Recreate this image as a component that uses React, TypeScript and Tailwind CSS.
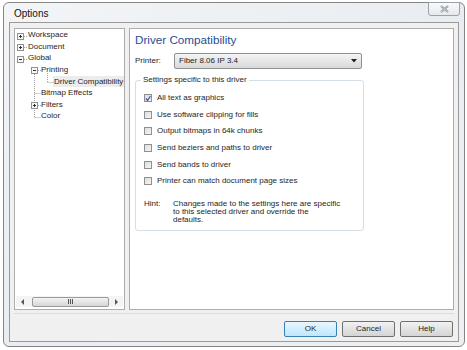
import React from "react";

const font = { fontFamily: '"Liberation Sans", Arial, sans-serif' };

function TreeLines() {
  const dot = { stroke: "#a0a0a0", strokeWidth: 1, strokeDasharray: "1 1" };
  const Box = ({ x, y, plus }: { x: number; y: number; plus: boolean }) => (
    <g>
      <rect x={x - 3} y={y - 3} width={6} height={6} fill="#f7f7f7" stroke="#919191" strokeWidth={1} />
      <line x1={x - 1.5} y1={y} x2={x + 1.5} y2={y} stroke="#333" strokeWidth={1} />
      {plus && <line x1={x} y1={y - 1.5} x2={x} y2={y + 1.5} stroke="#333" strokeWidth={1} />}
    </g>
  );
  // coords inside the tree panel border (page x 15, y 29)
  return (
    <svg className="absolute left-px top-px pointer-events-none" width={110} height={100}>
      <line x1={8} y1={6.5} x2={12} y2={6.5} {...dot} />
      <line x1={8} y1={17.5} x2={12} y2={17.5} {...dot} />
      <line x1={8} y1={29.5} x2={12} y2={29.5} {...dot} />
      <line x1={18.5} y1={44} x2={18.5} y2={87.5} {...dot} />
      <line x1={22} y1={40.5} x2={25} y2={40.5} {...dot} />
      <line x1={18.5} y1={63.5} x2={25} y2={63.5} {...dot} />
      <line x1={22} y1={75.5} x2={25} y2={75.5} {...dot} />
      <line x1={18.5} y1={87.5} x2={25} y2={87.5} {...dot} />
      <line x1={31.5} y1={41} x2={31.5} y2={52.5} {...dot} />
      <line x1={31.5} y1={52.5} x2={38} y2={52.5} {...dot} />
      <Box x={4.5} y={6.5} plus />
      <Box x={4.5} y={17.5} plus />
      <Box x={4.5} y={29.5} plus={false} />
      <Box x={18.5} y={40.5} plus={false} />
      <Box x={18.5} y={75.5} plus />
    </svg>
  );
}

function Tree() {
  const rows: [string, number, boolean?][] = [
    ["Workspace", 0],
    ["Document", 0],
    ["Global", 0],
    ["Printing", 1],
    ["Driver Compatibility", 2, true],
    ["Bitmap Effects", 1],
    ["Filters", 1],
    ["Color", 1],
  ];
  return (
    <div className="w-[111px] shrink-0 border border-[#adadad] bg-white flex flex-col relative">
      <TreeLines />
      <div className="flex-1 flex flex-col overflow-hidden">
        {rows.map(([label, lvl, sel]) => (
          <div key={label} className="h-[11.6px] flex items-center">
            <div
              className={
                "shrink-0 " + (lvl === 0 ? "w-[12px]" : lvl === 1 ? "w-[25px]" : "w-[38px]")
              }
            />
            <span
              className={
                "text-[8px] leading-[11px] text-[#1e1e1e] px-[1px] whitespace-nowrap " +
                (sel ? "bg-[#ececec] pr-[3px]" : "")
              }
            >
              {label}
            </span>
          </div>
        ))}
      </div>
      <div className="h-[11px] mx-[1px] mb-[2px] flex items-center gap-[2px] bg-[#f4f4f4]">
        <div className="w-[14px] flex justify-center">
          <svg width="4" height="6"><path d="M3 0 L0 3 L3 6 Z" fill="#555" /></svg>
        </div>
        <div className="flex-1 h-[10px] rounded-[2px] border border-[#9a9a9a] bg-gradient-to-b from-[#f4f4f4] to-[#d6d6d6] flex items-center justify-center">
          <svg width="6" height="5">
            <path d="M0.5 0 V5 M2.5 0 V5 M4.5 0 V5" stroke="#555" strokeWidth="1" />
          </svg>
        </div>
        <div className="w-[12px] flex justify-center">
          <svg width="4" height="6"><path d="M0 0 L3 3 L0 6 Z" fill="#555" /></svg>
        </div>
      </div>
    </div>
  );
}

function Check({ label, checked }: { label: string; checked?: boolean }) {
  return (
    <div className="h-[16.6px] flex items-center gap-[5px]">
      <div className="w-[8px] h-[8px] border border-[#8f8f8f] bg-gradient-to-br from-[#dcdcdc] to-[#f6f6f6] flex items-center justify-center">
        {checked && (
          <svg width="7" height="7" viewBox="0 0 7 7">
            <path d="M1 3.5 L3 5.8 L6.3 0.8" stroke="#3a58a8" strokeWidth="1.4" fill="none" />
          </svg>
        )}
      </div>
      <span className="text-[8px] text-[#1e1e1e] whitespace-nowrap">{label}</span>
    </div>
  );
}

function Btn({ label, def }: { label: string; def?: boolean }) {
  return (
    <div
      className={
        "w-[53px] h-[16px] rounded-[2px] border flex items-center justify-center text-[8px] text-[#1e1e1e] " +
        (def
          ? "border-[#3c7fb1] bg-gradient-to-b from-[#eaf6fd] to-[#bee6fd]"
          : "border-[#707070] bg-gradient-to-b from-[#f2f2f2] to-[#d4d4d4]")
      }
    >
      {label}
    </div>
  );
}

export default function App() {
  return (
    <div className="w-[467px] h-[350px] bg-white pt-[2px] pl-[3px]" style={font}>
      <div className="w-[462px] h-[345px] rounded-[6px] border border-[#858585] bg-gradient-to-br from-[#f3f5f7] via-[#e9edf1] to-[#eef0f2] flex flex-col px-[5px] pb-[4px]">
        <div className="h-[19px] flex justify-between">
          <span className="text-[10px] text-[#111] pl-[5px] pt-[5px] leading-[12px]">Options</span>
          <div className="w-[32px] h-[14px] mr-[-1px] mt-[-1px] rounded-b-[3px] border border-[#9aa2ab] bg-gradient-to-b from-[#f9fafb] to-[#e6e9ec] flex items-center justify-center">
            <svg width="9" height="8" viewBox="0 0 9 8">
              <path d="M1 1 L8 7 M8 1 L1 7" stroke="#8a8f95" strokeWidth="2" />
              <path d="M1 1 L8 7 M8 1 L1 7" stroke="#f4f4f4" strokeWidth="0.6" />
            </svg>
          </div>
        </div>
        <div className="flex-1 border border-[#9a9a9a] bg-[#f0f0f0] flex flex-col pt-[5px] px-[4px]">
          <div className="h-[282px] flex gap-[4px]">
            <Tree />
            <div className="flex-1 border border-[#adadad] bg-white pl-[5px] pt-[3px]">
              <div className="text-[11.7px] leading-[16px] text-[#1e4e96]">Driver Compatibility</div>
              <div className="flex items-center mt-[5px]">
                <span className="w-[39px] text-[8px] text-[#1e1e1e]">Printer:</span>
                <div className="w-[188px] h-[16px] rounded-[2px] border border-[#8e8f8f] bg-gradient-to-b from-[#f4f4f4] to-[#d9d9d9] flex items-center justify-between px-[4px]">
                  <span className="text-[8px] text-[#1e1e1e]">Fiber 8.06 IP 3.4</span>
                  <svg width="6" height="4"><path d="M0 0 H6 L3 3.5 Z" fill="#222" /></svg>
                </div>
              </div>
              <div className="relative w-[229px] h-[151px] mt-[11px] border border-[#d5dfe5] rounded-[3px] pl-[8px] pt-[9px]">
                <span className="absolute left-[5px] top-[-6px] bg-white px-[2px] text-[8px] leading-[10px] text-[#1e1e1e]">
                  Settings specific to this driver
                </span>
                <Check label="All text as graphics" checked />
                <Check label="Use software clipping for fills" />
                <Check label="Output bitmaps in 64k chunks" />
                <Check label="Send beziers and paths to driver" />
                <Check label="Send bands to driver" />
                <Check label="Printer can match document page sizes" />
                <div className="flex mt-[10px] text-[8px] leading-[8px] text-[#1e1e1e]">
                  <span className="w-[29px]">Hint:</span>
                  <span className="whitespace-nowrap">
                    Changes made to the settings here are specific
                    <br />
                    to this selected driver and override the
                    <br />
                    defaults.
                  </span>
                </div>
              </div>
            </div>
          </div>
          <div className="mt-[3px] border-t border-[#dcdcdc]" />
          <div className="flex justify-end gap-[5px] pt-[7px] pr-[1px]">
            <Btn label="OK" def />
            <Btn label="Cancel" />
            <Btn label="Help" />
          </div>
        </div>
      </div>
    </div>
  );
}
